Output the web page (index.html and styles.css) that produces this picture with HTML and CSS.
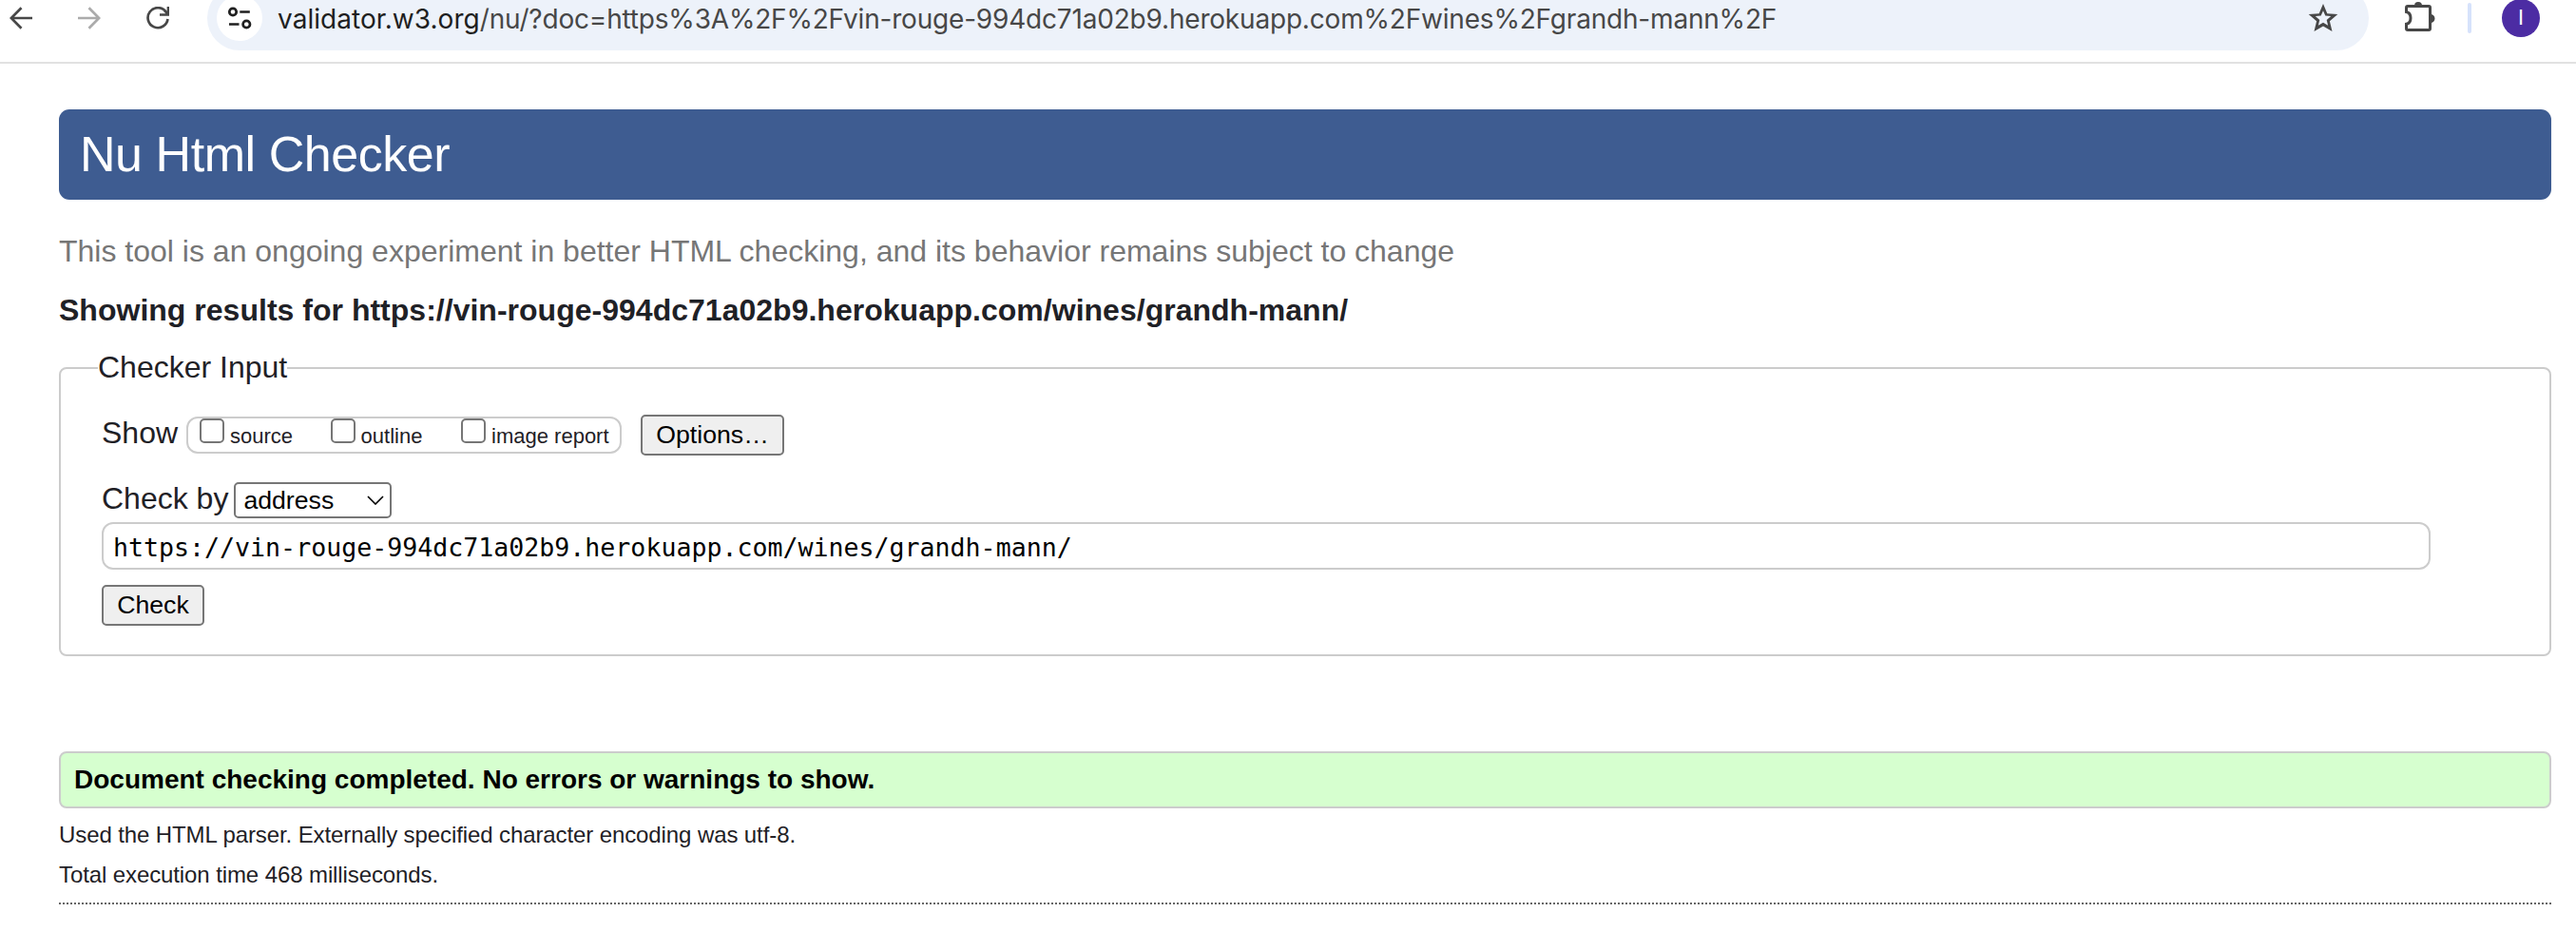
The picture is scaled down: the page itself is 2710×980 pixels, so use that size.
FILE: index.html
```html
<!DOCTYPE html>
<html lang="en">
<head>
<meta charset="utf-8">
<title>Showing results for https://vin-rouge-994dc71a02b9.herokuapp.com/wines/grandh-mann/ - Nu Html Checker</title>
<link rel="stylesheet" href="styles.css">
</head>
<body>
<div class="toolbar">
  <svg class="nav-icon" viewBox="0 0 24 24"><path d="M24 12H2M12.5 1.2L1.8 12l10.700 10.800"/></svg>
  <svg class="nav-icon nav-forward" viewBox="0 0 24 24"><path d="M0 12h22M11.500 1.200L22.200 12 11.500 22.800"/></svg>
  <svg class="nav-icon nav-reload" viewBox="0 0 24 24"><path d="M20.500 5.400A10.500 10.500 0 1 0 22.500 13M23 0v8.500H14M23 8L19 4"/></svg>
  <div class="omnibox">
    <div class="site-info">
      <svg class="tune" viewBox="0 0 26 24"><circle cx="6" cy="5.500" r="3.700"/><circle cx="20.300" cy="18.500" r="3.700"/><path d="M13.300 5.500h10.500M2 18.500h10.500"/></svg>
    </div>
    <div class="url"><span class="host">validator.w3.org</span>/nu/?doc=https%3A%2F%2Fvin-rouge-994dc71a02b9.herokuapp.com%2Fwines%2Fgrandh-mann%2F</div>
    <svg class="star" viewBox="0 0 32 30"><path fill-rule="evenodd" d="M16 0l4.300 10.200 11 .9-8.400 7.200 2.600 10.800L16 23.400 6.500 29.100l2.600-10.800L.7 11.100l11-.9zM16 7.200l-2.300 5.400-5.900.5 4.500 3.900-1.400 5.800 5.100-3.100 5.100 3.100-1.400-5.800 4.500-3.900-5.900-.5z"/></svg>
  </div>
  <svg class="puzzle" viewBox="0 0 32 32"><path class="puzzle-line" d="M1.500 11V7Q1.500 5.500 3 5.500H25Q26.500 5.500 26.500 7V29Q26.500 30.500 25 30.500H3Q1.500 30.500 1.500 29V24.300Q6 23.500 6 18T1.500 11.500Z"/><path d="M10 5a4 4 0 0 1 8 0zM27 14a4 4 0 0 1 0 9z"/></svg>
  <span class="divider"></span>
  <span class="avatar"><span class="initial">I</span></span>
</div>
<main class="page">
  <h1 class="banner">Nu Html Checker</h1>
  <p class="tagline">This tool is an ongoing experiment in better HTML checking, and its behavior remains subject to change</p>
  <h2 class="results-for">Showing results for https://vin-rouge-994dc71a02b9.herokuapp.com/wines/grandh-mann/</h2>
  <form class="checker">
    <span class="legend">Checker Input</span>
    <div class="show-row">
      <span class="label show-label">Show</span>
      <div class="show-options">
        <label class="option"><input class="check" type="checkbox"><span>source</span></label>
        <label class="option"><input class="check" type="checkbox"><span>outline</span></label>
        <label class="option"><input class="check" type="checkbox"><span>image report</span></label>
      </div>
      <button class="button options-button" type="button">Options…</button>
    </div>
    <div class="by-row">
      <span class="label">Check by</span>
      <div class="select">address<svg class="chevron" viewBox="0 0 18 10"><path d="M1 1l8 8 8-8"/></svg></div>
    </div>
    <input class="address" type="text" value="https://vin-rouge-994dc71a02b9.herokuapp.com/wines/grandh-mann/">
    <button class="button check-button" type="button">Check</button>
  </form>
  <p class="success">Document checking completed. No errors or warnings to show.</p>
  <p class="detail">Used the HTML parser. Externally specified character encoding was utf-8.</p>
  <p class="detail">Total execution time 468 milliseconds.</p>
  <div class="rule"></div>
</main>
</body>
</html>
```

FILE: styles.css
```css
* { box-sizing: border-box; }
body {
  margin: 0;
  background: #fff;
  color: #1f2126;
  font-family: "Liberation Sans", Arial, sans-serif;
  overflow: hidden;
}
h1, h2, p { margin: 0; white-space: nowrap; }

/* browser toolbar */
.toolbar {
  display: flex;
  align-items: center;
  height: 82px;
  margin-top: -15px;
  padding: 0 38px 12px 10px;
  border-bottom: 2px solid #e1e1e1;
}
.nav-icon { width: 24px; height: 24px; flex: none; margin-right: 48px; fill: none; stroke: #474747; stroke-width: 2.7; }
.nav-forward { stroke: #ababab; }
.nav-reload { margin: 0 40px 0 0; }
.omnibox {
  display: flex;
  align-items: center;
  flex: 1;
  height: 68px;
  padding: 0 32px 0 10px;
  border-radius: 34px;
  background: #edf2fa;
}
.site-info { display: flex; align-items: center; justify-content: center; width: 48px; height: 48px; border-radius: 50%; background: #fff; }
.tune { width: 26px; height: 24px; fill: none; stroke: #1f1f1f; stroke-width: 2.700; }
.url { flex: 1; margin-left: 16px; padding-top: 1px; font: 28px/34px Inter, sans-serif; letter-spacing: -0.19px; color: #474747; white-space: nowrap; }
.host { color: #1f1f1f; letter-spacing: 0.05px; }
.star { width: 32px; height: 30px; fill: #474747; }
.puzzle { width: 32px; height: 32px; margin: 0 34px 4px 38px; fill: #474747; }
.puzzle-line { fill: none; stroke: #474747; stroke-width: 3; }
.divider { width: 4px; height: 32px; border-radius: 2px; background: #d6e2fb; }
.avatar { display: flex; align-items: center; justify-content: center; width: 40px; height: 40px; margin-left: 32px; border-radius: 50%; background: #4c2ca3; }
.initial { font: 22px/24px Roboto, sans-serif; color: #fff; }

/* checker page */
.page { padding: 48px 26px 0 62px; }
.banner {
  height: 95px;
  padding: 0 22px;
  border-radius: 11px;
  background: #3e5c91;
  color: #fff;
  font-size: 52px;
  font-weight: 400;
  line-height: 94px;
  letter-spacing: -0.45px;
}
.tagline { margin-top: 36px; font-size: 32px; line-height: 36px; color: #767676; }
.results-for { margin-top: 26px; font-size: 32px; line-height: 36px; letter-spacing: 0.015px; }
.checker {
  position: relative;
  height: 304px;
  margin-top: 42px;
  padding: 48px 43px 0;
  border: 2px solid #ccc;
  border-radius: 8px;
}
.legend { position: absolute; left: 39px; top: -20px; background: #fff; font-size: 32px; line-height: 36px; white-space: nowrap; }
.show-row, .by-row { display: flex; }
.show-row { height: 43px; }
.label { font-size: 32px; line-height: 36px; white-space: nowrap; }
.show-label { padding-top: 1px; }
.show-options { display: flex; width: 458px; height: 39px; margin: 2px 20px 0 9px; padding: 0 0 0 12px; border: 2px solid #ccc; border-radius: 12px; white-space: nowrap; }
.option { display: flex; width: 137.5px; font-size: 22px; line-height: 35px; }
.option span { padding-top: 1px; }
.check { appearance: none; flex: none; width: 26px; height: 26px; margin: 0 6px 0 0; border: 2px solid #767676; border-radius: 5px; background: #fff; }
.button { display: block; height: 43px; padding: 0 0 1px; border: 2px solid #767676; border-radius: 5px; background: #efefef; color: #000; font: 26.667px/37px "Liberation Sans", Arial, sans-serif; }
.options-button { width: 151px; }
.by-row { height: 42px; margin-top: 28px; }
.by-row .label { line-height: 34px; }
.select { display: flex; align-items: center; justify-content: space-between; width: 166px; height: 38px; margin-left: 6px; padding: 0 6px 0 8px; border: 2px solid #767676; border-radius: 5px; color: #000; font-size: 26.667px; line-height: 34px; }
.chevron { width: 18px; height: 10px; fill: none; stroke: #000; stroke-width: 1.6; }
.address { display: block; width: 2450px; height: 50px; padding: 2px 10px 0; border: 2px solid #ccc; border-radius: 12px; color: #000; font: 26.600px "DejaVu Sans Mono", monospace; outline: none; }
.check-button { width: 108px; margin-top: 16px; }
.success {
  height: 60px;
  margin-top: 100px;
  padding-left: 14px;
  border: 2px solid #ccc;
  border-radius: 8px;
  background: #d6ffcf;
  color: #000;
  font-size: 28px;
  font-weight: 700;
  line-height: 56px;
}
.detail { margin-top: 14px; font-size: 24px; line-height: 28px; letter-spacing: -0.1px; }
.rule { height: 2px; margin-top: 15px; background: repeating-linear-gradient(to right, #666 0 2px, #fff 2px 4px); }
```
